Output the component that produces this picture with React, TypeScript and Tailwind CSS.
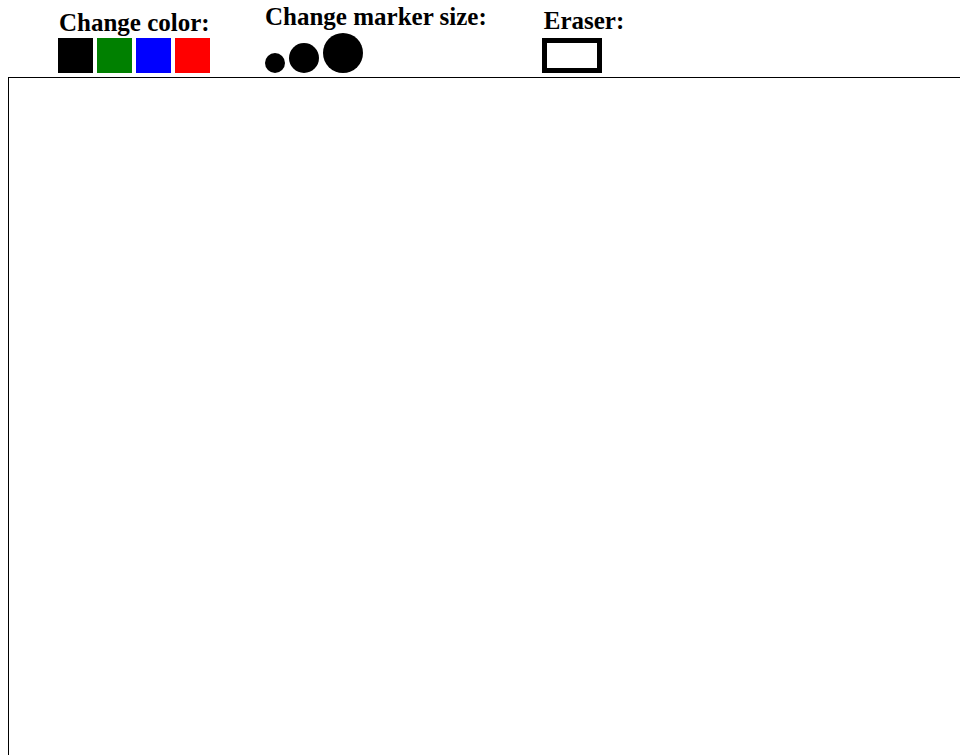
import React, { useState } from 'react';

const COLORS = ['#000000', '#008000', '#0000ff', '#ff0000'];
const SIZES = [20, 30, 40];

const Label = ({ children }: { children: React.ReactNode }) => (
  <div className="text-[25px] font-bold leading-[28px] text-black whitespace-nowrap">{children}</div>
);

const App: React.FC = () => {
  const [color, setColor] = useState('#000000');
  const [size, setSize] = useState(20);
  const [erasing, setErasing] = useState(false);

  return (
    <div className="h-[755px] w-[960px] overflow-hidden bg-white flex flex-col" style={{ fontFamily: '"Liberation Serif", "Times New Roman", serif' }}>
      <div className="flex items-end gap-[55px] pl-[58px] pt-[3px]">
        <div className="flex flex-col">
          <div className="pl-[1px]">
            <Label>Change color:</Label>
          </div>
          <div className="flex gap-[4px] mt-[1px]">
            {COLORS.map(c => (
              <div
                key={c}
                onClick={() => { setColor(c); setErasing(false); }}
                className="w-[35px] h-[35px] cursor-pointer"
                data-active={c === color}
                style={{ backgroundColor: c }}
              />
            ))}
          </div>
        </div>

        <div className="flex flex-col">
          <Label>Change marker size:</Label>
          <div className="flex items-end gap-[4px] mt-[2px]">
            {SIZES.map(s => (
              <div
                key={s}
                onClick={() => setSize(s)}
                className={`rounded-full bg-black cursor-pointer ${s === 20 ? 'w-[20px] h-[20px]' : s === 30 ? 'w-[30px] h-[30px]' : 'w-[40px] h-[40px]'}`}
                data-active={s === size}
              />
            ))}
          </div>
        </div>

        <div className="flex flex-col">
          <div className="pl-[2px]">
            <Label>Eraser:</Label>
          </div>
          <div
            onClick={() => setErasing(!erasing)}
            data-active={erasing}
            className="w-[60px] h-[35px] border-[5px] border-black bg-white cursor-pointer mt-[3px]"
          />
        </div>
      </div>

      <div className="flex-1 ml-[8px] mt-[4px] border-l border-t border-black bg-white" />
    </div>
  );
};

export default App;
